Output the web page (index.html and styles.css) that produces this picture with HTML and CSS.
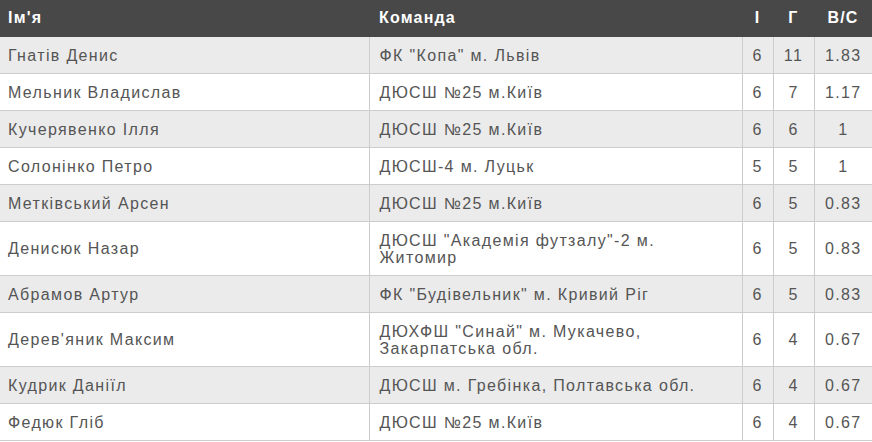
FILE: index.html
```html
<!DOCTYPE html>
<html lang="uk">
<head>
<meta charset="utf-8">
<link rel="stylesheet" href="styles.css">
</head>
<body>
<table class="stats">
  <colgroup>
    <col class="c-name"><col class="c-team"><col class="c-i"><col class="c-g"><col class="c-r">
  </colgroup>
  <thead>
    <tr><th class="name">Ім'я</th><th class="team">Команда</th><th class="num">І</th><th class="num">Г</th><th class="num">В/С</th></tr>
  </thead>
  <tbody>
    <tr><td class="name">Гнатів Денис</td><td class="team">ФК "Копа" м. Львів</td><td class="num">6</td><td class="num">11</td><td class="num">1.83</td></tr>
    <tr><td class="name">Мельник Владислав</td><td class="team">ДЮСШ №25 м.Київ</td><td class="num">6</td><td class="num">7</td><td class="num">1.17</td></tr>
    <tr><td class="name">Кучерявенко Ілля</td><td class="team">ДЮСШ №25 м.Київ</td><td class="num">6</td><td class="num">6</td><td class="num">1</td></tr>
    <tr><td class="name">Солонінко Петро</td><td class="team">ДЮСШ-4 м. Луцьк</td><td class="num">5</td><td class="num">5</td><td class="num">1</td></tr>
    <tr><td class="name">Метківський Арсен</td><td class="team">ДЮСШ №25 м.Київ</td><td class="num">6</td><td class="num">5</td><td class="num">0.83</td></tr>
    <tr><td class="name">Денисюк Назар</td><td class="team">ДЮСШ "Академія футзалу"-2 м. Житомир</td><td class="num">6</td><td class="num">5</td><td class="num">0.83</td></tr>
    <tr><td class="name">Абрамов Артур</td><td class="team">ФК "Будівельник" м. Кривий Ріг</td><td class="num">6</td><td class="num">5</td><td class="num">0.83</td></tr>
    <tr><td class="name">Дерев'яник Максим</td><td class="team">ДЮХФШ "Синай" м. Мукачево, Закарпатська обл.</td><td class="num">6</td><td class="num">4</td><td class="num">0.67</td></tr>
    <tr><td class="name">Кудрик Даніїл</td><td class="team">ДЮСШ м. Гребінка, Полтавська обл.</td><td class="num">6</td><td class="num">4</td><td class="num">0.67</td></tr>
    <tr><td class="name">Федюк Гліб</td><td class="team">ДЮСШ №25 м.Київ</td><td class="num">6</td><td class="num">4</td><td class="num">0.67</td></tr>
  </tbody>
</table>
</body>
</html>
```
FILE: styles.css
```css
html, body {
  margin: 0;
  padding: 0;
  background: #fff;
}
.stats {
  width: 872px;
  border-collapse: collapse;
  table-layout: fixed;
  font-family: "Liberation Sans", Arial, sans-serif;
  font-size: 16px;
  letter-spacing: 1.35px;
  color: #555;
}
.c-name { width: 369px; }
.c-team { width: 373px; }
.c-i { width: 31px; }
.c-g { width: 41px; }
.c-r { width: 58px; }
.stats th {
  background: #484848;
  color: #fff;
  font-weight: bold;
  text-align: left;
  height: 37px;
  padding: 0 10px 1px;
  line-height: 16px;
  box-sizing: border-box;
  letter-spacing: 1.2px;
}
.stats td {
  padding: 9.5px 10px;
  line-height: 17px;
  border: 1px solid #ccc;
  border-top: none;
  vertical-align: middle;
}
.stats tbody tr:nth-child(odd) td {
  background: #ebebeb;
}
.stats th.name, .stats td.name {
  padding-left: 8px;
  border-left: none;
}
.stats td:last-child {
  border-right: none;
}
.stats th.num, .stats td.num {
  text-align: center;
  padding-left: 0;
  padding-right: 0;
}
```
